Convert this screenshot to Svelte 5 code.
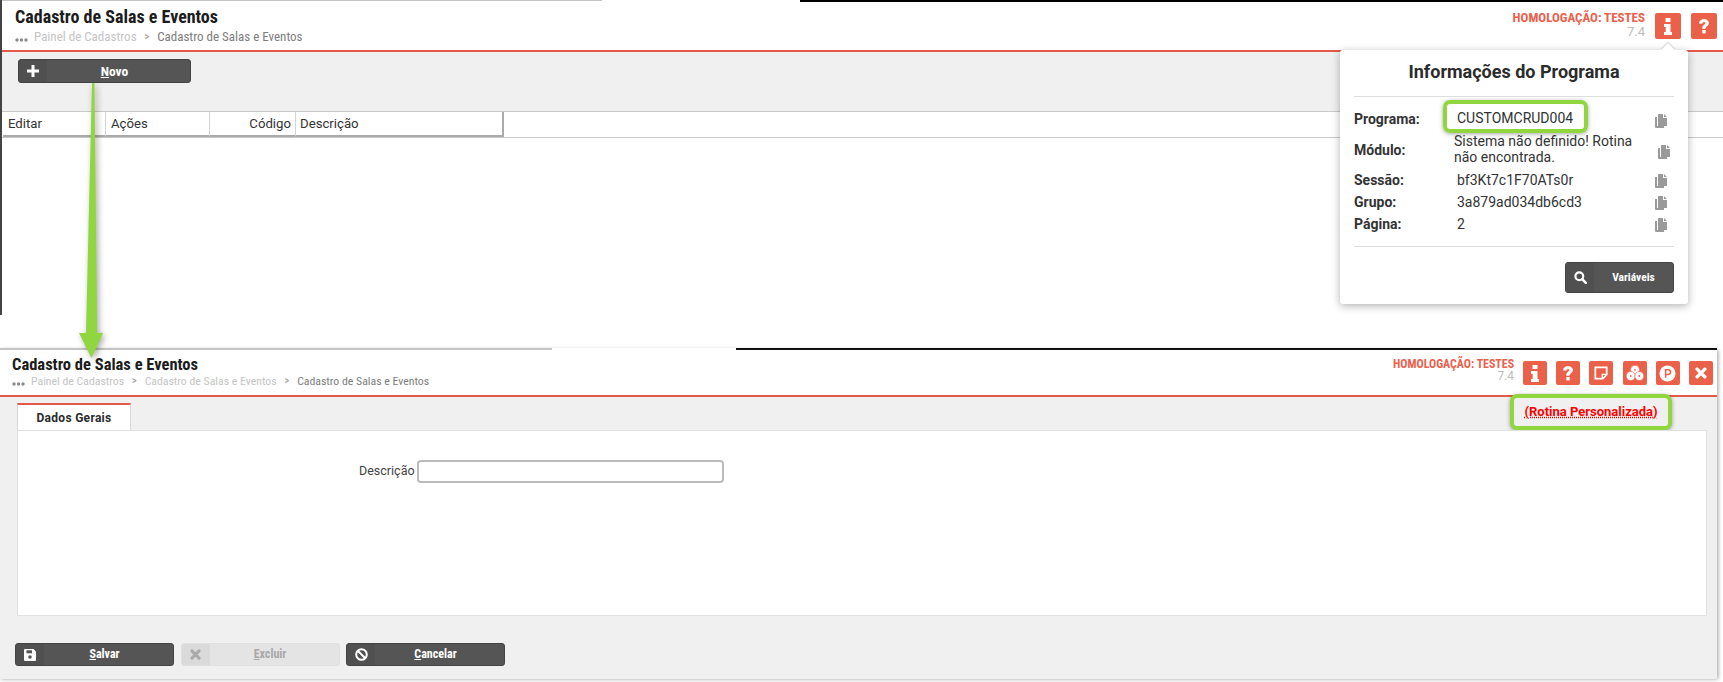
<script>
	const trail2 = ['Painel de Cadastros', 'Cadastro de Salas e Eventos'];
	const infoRows = [
		{ label: 'Sessão:', value: 'bf3Kt7c1F70ATs0r' },
		{ label: 'Grupo:', value: '3a879ad034db6cd3' },
		{ label: 'Página:', value: '2' }
	];
	const columns = [
		{ name: 'Editar', cls: 'c-edit' },
		{ name: 'Ações', cls: 'c-acoes' },
		{ name: 'Código', cls: 'c-cod' },
		{ name: 'Descrição', cls: 'c-desc' }
	];
</script>

{#snippet dots()}
	<svg class="dots" width="13" height="4" viewBox="0 0 13 4"><circle cx="2" cy="2" r="1.7" /><circle cx="6.5" cy="2" r="1.7" /><circle cx="11" cy="2" r="1.7" /></svg>
{/snippet}

{#snippet infoIcon()}
	<svg width="16" height="18" viewBox="0 0 16 18"><path d="M5.5 1h5v4h-5zM4 7h6.5v8H12v3H4v-3h1.7v-5H4z" fill="#fff" /></svg>
{/snippet}

{#snippet helpIcon()}
	<svg width="16" height="18" viewBox="0 0 16 18"><path d="M3.5 6.2C3.7 3.6 5.6 2.4 8 2.4c2.500 0 4.500 1.400 4.500 3.700 0 3-3.300 3-3.300 5.300H6.600c0-3.600 3.100-3.500 3.100-5.300 0-.9-.8-1.300-1.700-1.300-1 0-1.600.5-1.800 1.500z" fill="#fff" stroke="#fff" stroke-width=".8" /><rect x="6.300" y="13" width="3.400" height="3.400" fill="#fff" /></svg>
{/snippet}

{#snippet copyIcon()}
	<svg class="copy" width="13" height="14" viewBox="0 0 13 14"><path d="M1 3h2v9h7v2H2a1 1 0 0 1-1-1z M4 0h5v4h4v7.500a.5.5 0 0 1-.5.5H4.500a.5.5 0 0 1-.5-.5z M10 0l3 3h-3z" fill="#9a9a9a" /></svg>
{/snippet}

<div class="page">
	<section class="shot first">
		<div class="edge"><i class="seg-grey"></i><i class="seg-black"></i></div>
		<header class="top big">
			<div class="heading">
				<h1>Cadastro de Salas e Eventos</h1>
				<div class="trail">
					{@render dots()}
					<span class="muted">Painel de Cadastros</span>
					<span class="sep">&gt;</span>
					<span>Cadastro de Salas e Eventos</span>
				</div>
			</div>
			<div class="env">
				<strong>HOMOLOGAÇÃO: TESTES</strong>
				<span>7.4</span>
			</div>
			<div class="tools">
				<button class="tool">{@render infoIcon()}</button>
				<button class="tool">{@render helpIcon()}</button>
			</div>
		</header>

		<div class="toolbar">
			<button class="btn novo">
				<span class="btn-ico"><svg width="12" height="12" viewBox="0 0 12 12"><path d="M4.500 0h3v4.500H12v3H7.500V12h-3V7.500H0v-3h4.500z" fill="#fff" /></svg></span>
				<span class="btn-label"><u>N</u>ovo</span>
			</button>
		</div>

		<div class="grid">
			<div class="grid-head">
				{#each columns as col}
					<div class="th {col.cls}">{col.name}</div>
				{/each}
			</div>
		</div>

		<aside class="pop">
			<h2>Informações do Programa</h2>
			<hr />
			<div class="row programa">
				<span class="lbl">Programa:</span>
				<span class="mark">CUSTOMCRUD004</span>
				{@render copyIcon()}
			</div>
			<div class="row modulo">
				<span class="lbl">Módulo:</span>
				<span class="val wrap">Sistema não definido! Rotina não encontrada.</span>
				{@render copyIcon()}
			</div>
			{#each infoRows as r}
				<div class="row plain">
					<span class="lbl">{r.label}</span>
					<span class="val">{r.value}</span>
					{@render copyIcon()}
				</div>
			{/each}
			<hr class="low" />
			<div class="pop-foot">
				<button class="btn vars">
					<span class="btn-ico"><svg width="13" height="13" viewBox="0 0 13 13"><circle cx="5.300" cy="5.300" r="3.900" fill="none" stroke="#fff" stroke-width="2.200" /><path d="M8.200 8.200l3.600 3.600" stroke="#fff" stroke-width="2.600" stroke-linecap="round" /></svg></span>
					<span class="btn-label">Variáveis</span>
				</button>
			</div>
		</aside>
	</section>

	<section class="shot second">
		<div class="edge"><i class="seg-grey low-grey"></i><i class="seg-black"></i></div>
		<header class="top small">
			<div class="heading">
				<h1>Cadastro de Salas e Eventos</h1>
				<div class="trail">
					{@render dots()}
					{#each trail2 as t}
						<span class="muted">{t}</span>
						<span class="sep">&gt;</span>
					{/each}
					<span>Cadastro de Salas e Eventos</span>
				</div>
			</div>
			<div class="env">
				<strong>HOMOLOGAÇÃO: TESTES</strong>
				<span>7.4</span>
			</div>
			<div class="tools">
				<button class="tool">{@render infoIcon()}</button>
				<button class="tool">{@render helpIcon()}</button>
				<button class="tool">
					<svg width="14" height="14" viewBox="0 0 16 16"><path d="M1.500 1.500h13v8.500L10 14.500H1.500z" fill="none" stroke="#fff" stroke-width="2" /><path d="M9.500 14.500V9.500H14.500" fill="none" stroke="#fff" stroke-width="1.500" /></svg>
				</button>
				<button class="tool">
					<svg width="18" height="16" viewBox="0 0 18 16"><g fill="#fff" stroke="#eb6049" stroke-width=".6"><circle cx="9" cy="4.800" r="4.500" /><circle cx="4.700" cy="11" r="4.500" /><circle cx="13.300" cy="11" r="4.500" /></g><circle cx="9" cy="4.800" r=".9" fill="#eb6049" /><circle cx="4.700" cy="11" r=".9" fill="#eb6049" /><circle cx="13.300" cy="11" r=".9" fill="#eb6049" /></svg>
				</button>
				<button class="tool">
					<svg width="17" height="17" viewBox="0 0 18 18"><circle cx="9" cy="9" r="8.500" fill="#fff" /><path d="M7 13.500V5h2.700a2.400 2.400 0 0 1 0 5H7" fill="none" stroke="#eb6049" stroke-width="1.600" /></svg>
				</button>
				<button class="tool">
					<svg width="12" height="12" viewBox="0 0 14 14"><path d="M2.500 2.500l9 9M11.500 2.500l-9 9" stroke="#fff" stroke-width="4" stroke-linecap="round" /></svg>
				</button>
			</div>
		</header>

		<div class="body">
			<div class="tabs">
				<div class="tab">Dados Gerais</div>
				<div class="custom"><span>(Rotina Personalizada)</span></div>
			</div>
			<div class="panel">
				<label class="field" for="descricao">
					<span>Descrição</span>
					<input id="descricao" type="text" />
				</label>
			</div>
			<div class="actions">
				<button class="btn act">
					<span class="btn-ico"><svg width="12" height="12" viewBox="0 0 12 12"><path d="M1 0h8.500L12 2.500V11a1 1 0 0 1-1 1H1a1 1 0 0 1-1-1V1a1 1 0 0 1 1-1z" fill="#fff" /><rect x="2.500" y="1.300" width="5.500" height="3" fill="#555" /><circle cx="6" cy="8" r="1.800" fill="#555" /></svg></span>
					<span class="btn-label"><u>S</u>alvar</span>
				</button>
				<button class="btn act off">
					<span class="btn-ico"><svg width="11" height="11" viewBox="0 0 14 14"><path d="M2.500 2.500l9 9M11.500 2.500l-9 9" stroke="#aaa" stroke-width="4" stroke-linecap="round" /></svg></span>
					<span class="btn-label"><u>E</u>xcluir</span>
				</button>
				<button class="btn act">
					<span class="btn-ico"><svg width="13" height="13" viewBox="0 0 13 13"><circle cx="6.500" cy="6.500" r="5.300" fill="none" stroke="#fff" stroke-width="2" /><path d="M3 3l7 7" stroke="#fff" stroke-width="2" /></svg></span>
					<span class="btn-label"><u>C</u>ancelar</span>
				</button>
			</div>
		</div>
	</section>

	<svg class="arrow" width="110" height="280" viewBox="0 0 110 280">
		<path d="M92 0h2.500L97 250h6L91.500 275 79 250h7z" fill="#8fd63f" />
	</svg>
</div>

<style>
	:global(body) {
		margin: 0;
		background: #fff;
	}

	.page {
		position: relative;
		width: 1723px;
		height: 682px;
		overflow: hidden;
		background: #fff;
		font-family: Roboto, 'Liberation Sans', sans-serif;
		color: #333;
	}

	button {
		font-family: inherit;
		padding: 0;
		cursor: pointer;
	}

	.shot {
		display: flex;
		flex-direction: column;
		background: #fff;
	}

	.first {
		position: relative;
		height: 315px;
		box-sizing: border-box;
		border-left: 2px solid #444;
	}

	.second {
		margin-top: 33px;
		width: 1717px;
		height: 329px;
		box-shadow: 1px 2px 4px rgba(0, 0, 0, 0.4);
	}

	.edge {
		display: flex;
		justify-content: space-between;
		height: 2px;
		flex: none;
	}

	.seg-grey {
		width: 600px;
		height: 1px;
		background: #c4c4c4;
	}

	.low-grey {
		width: 552px;
		height: 2px;
	}

	.seg-black {
		width: 923px;
		background: #000;
	}

	.second .seg-black {
		width: 981px;
		background: #111;
	}

	/* cabecalho */
	.top {
		display: flex;
		align-items: flex-start;
		flex: none;
		box-sizing: border-box;
		border-bottom: 2px solid #e5594a;
	}

	.big {
		height: 50px;
		padding: 4px 6px 0 13px;
	}

	.small {
		height: 47px;
		padding: 5px 4px 0 12px;
	}

	.heading {
		flex: 1;
	}

	h1 {
		margin: 0;
		font-weight: 700;
		color: #1c1c1c;
		font-stretch: 75%;
		white-space: nowrap;
	}

	.big h1 {
		font-size: 18px;
		line-height: 22px;
	}

	.small h1 {
		font-size: 16.500px;
		line-height: 20px;
	}

	.trail {
		display: flex;
		align-items: center;
		color: #7d7d7d;
		white-space: nowrap;
		font-stretch: 75%;
	}

	.big .trail {
		font-size: 13px;
		line-height: 16px;
		margin-top: 1px;
		gap: 8px;
	}

	.small .trail {
		font-size: 11.800px;
		line-height: 14px;
		margin-top: -1px;
		gap: 8px;
	}

	.dots {
		fill: #8c8c8c;
		margin: 5px -2px 0 0;
	}

	.muted {
		color: #c4c4c4;
	}

	.sep {
		color: #aaa;
		font-size: 10px;
		font-weight: 700;
	}

	.env {
		display: flex;
		flex-direction: column;
		align-items: flex-end;
		color: #bbb;
	}

	.env strong {
		color: #ec5f4c;
		font-weight: 700;
		font-stretch: 75%;
	}

	.big .env {
		font-size: 13px;
		line-height: 14px;
		margin: 5px 10px 0 0;
	}

	.small .env {
		font-size: 11.900px;
		line-height: 12px;
		margin: 3px 9px 0 0;
	}

	.tools {
		display: flex;
	}

	.big .tools {
		gap: 10px;
		margin-top: 7px;
	}

	.small .tools {
		gap: 9.200px;
		margin-top: 6px;
	}

	.tool {
		display: flex;
		align-items: center;
		justify-content: center;
		border: 0;
		border-radius: 2px;
		background: #eb6049;
	}

	.big .tool {
		width: 26px;
		height: 26px;
	}

	.small .tool {
		width: 24px;
		height: 24px;
	}

	/* botoes escuros */
	.btn {
		display: flex;
		align-items: stretch;
		box-sizing: border-box;
		border: 1px solid #444;
		border-radius: 3px;
		background: #555;
		color: #fff;
		font-size: 12px;
		font-weight: 700;
		overflow: hidden;
	}

	.btn-ico {
		display: flex;
		align-items: center;
		justify-content: center;
		flex: none;
		width: 28px;
		background: #505050;
	}

	.btn-label {
		flex: 1;
		display: flex;
		align-items: center;
		justify-content: center;
		padding: 0 8px 1px 0;
		font-stretch: 75%;
	}

	.toolbar {
		flex: none;
		height: 60px;
		box-sizing: border-box;
		padding: 7px 0 0 16px;
		background: #f0f0f0;
		border-bottom: 1px solid #c9c9c9;
	}

	.novo {
		width: 173px;
		height: 24px;
		font-size: 13.500px;
	}

	/* tabela */
	.grid {
		flex: 1;
	}

	.grid-head {
		display: flex;
		height: 25px;
		border-bottom: 1px solid #c9c9c9;
		box-sizing: content-box;
	}

	.th {
		box-sizing: border-box;
		height: 25px;
		border-bottom: 2px solid #aaa;
		border-right: 1px solid #d4d4d4;
		font-size: 13.200px;
		line-height: 24px;
		padding: 0 5px;
		color: #333;
	}

	.c-edit {
		margin-left: 1px;
		width: 103px;
		padding-left: 5px;
	}

	.c-acoes {
		width: 104px;
		padding-left: 5px;
	}

	.c-cod {
		width: 86px;
		text-align: right;
		padding-right: 4px;
	}

	.c-desc {
		width: 208px;
		border-right: 2px solid #aaa;
		padding-left: 4px;
	}

	/* popover */
	.pop {
		position: absolute;
		top: 50px;
		right: 35px;
		width: 348px;
		height: 254px;
		box-sizing: border-box;
		padding: 0 14px;
		background: #fff;
		border-radius: 3px;
		box-shadow: 0 2px 8px rgba(0, 0, 0, 0.3);
	}

	.pop::before {
		content: '';
		position: absolute;
		top: -5px;
		left: 323px;
		width: 10px;
		height: 10px;
		background: #fff;
		transform: rotate(45deg);
		box-shadow: -1px -1px 1px rgba(0, 0, 0, 0.15);
	}

	.pop h2 {
		position: relative;
		margin: 0;
		height: 46px;
		font-size: 18px;
		line-height: 43px;
		font-weight: 700;
		text-align: center;
		color: #2b2b2b;
	}

	.pop hr {
		margin: 0 0 3px;
		border: 0;
		border-top: 1px solid #dedede;
	}

	.pop hr.low {
		margin: 11px 0 15px;
	}

	.row {
		display: flex;
		align-items: center;
		font-size: 14px;
		color: #333;
	}

	.lbl {
		flex: none;
		width: 89px;
		font-weight: 700;
		color: #333;
	}

	.copy {
		flex: none;
		margin: 1px 7.500px 0 auto;
	}

	.mark {
		box-sizing: border-box;
		width: 145px;
		height: 33px;
		line-height: 29px;
		padding-left: 10px;
		border: 4px solid #8fd63f;
		border-radius: 7px;
		box-shadow: 0 1px 4px rgba(0, 0, 0, 0.35);
	}

	.programa {
		height: 33px;
	}

	.programa .lbl {
		margin-top: 4px;
	}

	.programa .copy {
		margin-top: 9px;
	}

	.modulo {
		height: 36px;
	}

	.modulo .lbl {
		margin-top: -2px;
	}

	.modulo .val {
		margin: -4px 0 0 11px;
		width: 195px;
		line-height: 16px;
	}

	.modulo .copy {
		margin: 2px 4.500px 0 auto;
	}

	.plain {
		height: 22px;
	}

	.plain .val {
		margin-left: 14px;
	}

	.pop-foot {
		display: flex;
		justify-content: flex-end;
	}

	.vars {
		width: 109px;
		height: 31px;
		font-size: 11.500px;
	}

	.vars .btn-label {
		padding-right: 0;
	}

	/* segunda tela */
	.body {
		flex: 1;
		display: flex;
		flex-direction: column;
		background: #f0f0f0;
		padding: 0 10px 13px 15px;
	}

	.tabs {
		display: flex;
		align-items: flex-start;
		justify-content: space-between;
		height: 33px;
		flex: none;
		padding-left: 2px;
	}

	.tab {
		box-sizing: border-box;
		width: 114px;
		height: 28px;
		margin-top: 6px;
		background: #fff;
		border-top: 2px solid #e5594a;
		border-right: 1px solid #d8d8d8;
		border-left: 1px solid #d8d8d8;
		font-size: 12px;
		font-weight: 700;
		line-height: 26px;
		text-align: center;
		letter-spacing: 0.3px;
		color: #2b2b2b;
	}

	.custom {
		box-sizing: border-box;
		width: 162px;
		height: 36px;
		margin: -3px 35px 0 0;
		border: 4px solid #8fd63f;
		border-radius: 7px;
		box-shadow: 0 1px 4px rgba(0, 0, 0, 0.35);
		text-align: center;
		line-height: 27px;
		font-size: 13px;
		font-weight: 700;
		color: #f00;
		background: #f0f0f0;
	}

	.custom span {
		text-decoration: underline dotted #f00;
	}

	.panel {
		box-sizing: border-box;
		height: 186px;
		margin-left: 2px;
		padding: 29px 0 0 341px;
		background: #fff;
		border: 1px solid #e2e2e2;
		flex: none;
	}

	.field {
		display: flex;
		align-items: center;
		gap: 2px;
		font-size: 12.500px;
		color: #444;
	}

	.field span {
		margin-top: -3px;
	}

	.field input {
		box-sizing: border-box;
		width: 307px;
		height: 23px;
		border: 2px solid #bcbcbc;
		border-radius: 4px;
		background: #fff;
	}

	.actions {
		display: flex;
		gap: 6.500px;
		margin-top: 27px;
	}

	.act {
		width: 159px;
		height: 23px;
	}

	.off {
		background: #e4e4e4;
		border-color: #e0e0e0;
		color: #a8a8a8;
		cursor: default;
	}

	.off .btn-ico {
		background: #dadada;
	}

	/* seta da anotacao */
	.arrow {
		position: absolute;
		top: 83px;
		left: 0;
		filter: drop-shadow(2px 2px 3px rgba(0, 0, 0, 0.35));
	}
</style>
